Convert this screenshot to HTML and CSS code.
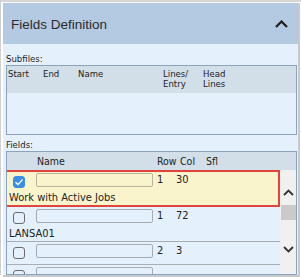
FILE: index.html
```html
<!DOCTYPE html>
<html>
<head>
<meta charset="utf-8">
<link rel="stylesheet" href="styles.css">
</head>
<body>
<div class="frame">
  <div class="panel">
    <div class="hdr">
      <span class="title">Fields Definition</span>
      <svg class="hchev" width="13" height="8" viewBox="0 0 13 8"><polyline points="1,7 6.5,1.5 12,7" fill="none" stroke="#1e1e1e" stroke-width="2.2"/></svg>
    </div>
    <div class="body">
      <div class="label">Subfiles:</div>
      <div class="box sub">
        <div class="shead">
          <div class="sc c-start">Start</div>
          <div class="sc c-end">End</div>
          <div class="sc c-name">Name</div>
          <div class="sc c-lines">Lines/<br>Entry</div>
          <div class="sc c-head">Head<br>Lines</div>
        </div>
      </div>
      <div class="label lf">Fields:</div>
      <div class="box fields">
        <div class="fhead">
          <div class="fh-name">Name</div>
          <div class="fh-row">Row</div>
          <div class="fh-col">Col</div>
          <div class="fh-sfl">Sfl</div>
        </div>
        <div class="fwrap">
          <div class="rows">
            <div class="row sel">
              <div class="line1">
                <span class="cb on"><svg width="12" height="12" viewBox="0 0 12 12"><polyline points="2.5,6.2 5,8.6 9.6,3.4" fill="none" stroke="#fff" stroke-width="1.4"/></svg></span>
                <span class="inp"></span>
                <span class="v-row">1</span>
                <span class="v-col">30</span>
              </div>
              <div class="desc">Work with Active Jobs</div>
            </div>
            <div class="row">
              <div class="line1">
                <span class="cb"></span>
                <span class="inp"></span>
                <span class="v-row">1</span>
                <span class="v-col">72</span>
              </div>
              <div class="desc">LANSA01</div>
            </div>
            <div class="row nodesc">
              <div class="line1">
                <span class="cb"></span>
                <span class="inp"></span>
                <span class="v-row">2</span>
                <span class="v-col">3</span>
              </div>
            </div>
            <div class="row nodesc">
              <div class="line1">
                <span class="cb"></span>
                <span class="inp"></span>
                <span class="v-row"></span>
                <span class="v-col"></span>
              </div>
            </div>
          </div>
          <div class="scroll">
            <svg class="sup" width="11" height="7" viewBox="0 0 11 7"><polyline points="1,6 5.5,1.5 10,6" fill="none" stroke="#333" stroke-width="1.8"/></svg>
            <div class="thumb"></div>
            <svg class="sdown" width="11" height="7" viewBox="0 0 11 7"><polyline points="1,1 5.5,5.5 10,1" fill="none" stroke="#333" stroke-width="1.8"/></svg>
          </div>
        </div>
      </div>
    </div>
  </div>
</div>
</body>
</html>
```
FILE: styles.css
```css
html, body {
  margin: 0;
  padding: 0;
  background: #ffffff;
}
body {
  width: 301px;
  height: 277px;
  overflow: hidden;
  font-family: "DejaVu Sans Condensed", "DejaVu Sans", "Liberation Sans", sans-serif;
  font-stretch: condensed;
  color: #222;
}
.frame {
  border-left: 1px solid #cfcfcf;
  border-top: 2px solid #d6d6d6;
  height: 275px;
  padding: 1px 0 0 2px;
  box-sizing: border-box;
}
.panel {
  width: 297px;
  height: 274px;
  box-sizing: border-box;
  border-right: 2px solid #c9c9c9;
  border-bottom: 2px solid #c9c9c9;
  background: #e4f0fc;
  display: flex;
  flex-direction: column;
}
.hdr {
  height: 41px;
  background: #b4cae3;
  display: flex;
  align-items: center;
  justify-content: space-between;
  padding: 0 10px 0 8px;
  flex: none;
}
.title {
  font-family: "Liberation Sans", Arial, sans-serif;
  font-stretch: normal;
  font-size: 13.5px;
  color: #2a2a2a;
  margin-top: 1px;
}
.hchev {
  display: block;
  margin-top: 1px;
}
.body {
  padding: 9px 1px 0 3px;
  display: flex;
  flex-direction: column;
}
.label {
  font-size: 9.5px;
  line-height: 12px;
  height: 12px;
  color: #1e1e1e;
}
.lf {
  margin-top: 4px;
}
.box {
  border: 1px solid #8ba3bc;
}
.sub {
  height: 68px;
}
.shead {
  height: 27px;
  background: #d3dfe8;
  display: flex;
  padding: 3px 0 0 1px;
  box-sizing: border-box;
  font-size: 9.5px;
  line-height: 10px;
  color: #222;
}
.c-start { width: 35px; }
.c-end { width: 35px; }
.c-name { width: 85px; }
.c-lines { width: 40px; }
.c-head { width: 40px; }

.fields {
  height: 122px;
  overflow: hidden;
  display: flex;
  flex-direction: column;
}
.fhead {
  height: 18px;
  flex: none;
  background: #d3dfe8;
  display: flex;
  align-items: center;
  font-size: 10.5px;
  color: #222;
}
.fh-name { padding-left: 30px; width: 120px; }
.fh-row { width: 23px; }
.fh-col { width: 26px; }
.fwrap {
  display: flex;
  flex: 1;
  min-height: 0;
}
.rows {
  width: 273px;
  flex: none;
}
.row {
  position: relative;
  padding: 2px 0 0 0;
  border-bottom: 1px solid #a9aeb3;
}
.row.nodesc {
  padding-bottom: 3px;
}
.row.sel {
  background: #faf4cc;
  padding-top: 3px;
  padding-bottom: 1px;
}
.row.sel::after {
  content: "";
  position: absolute;
  left: -3px;
  right: 0;
  top: 0;
  bottom: -1px;
  border: 2px solid #e0443c;
}
.line1 {
  height: 17px;
  display: flex;
  align-items: flex-start;
  font-size: 11px;
  line-height: 14px;
}
.cb {
  width: 12px;
  height: 12px;
  box-sizing: border-box;
  border: 1px solid #6a6a6a;
  border-radius: 3px;
  margin: 3px 0 0 6px;
  flex: none;
  display: block;
}
.cb.on {
  background: #3a8ee6;
  border-color: #3a8ee6;
}
.cb svg {
  display: block;
  margin: -1px;
}
.inp {
  width: 117px;
  height: 14px;
  box-sizing: border-box;
  border: 1px solid #a7acb2;
  border-radius: 2px;
  margin-left: 11px;
  flex: none;
}
.sel .inp {
  border-color: #b9b49e;
}
.v-row {
  padding-left: 4px;
  width: 19px;
}
.v-col {
  width: 26px;
}
.desc {
  height: 15px;
  font-size: 11px;
  line-height: 15px;
  padding-left: 2px;
}
.scroll {
  width: 16px;
  flex: none;
  background: #f0f0f0;
  display: flex;
  flex-direction: column;
  align-items: center;
}
.sup {
  display: block;
  margin-top: 19px;
}
.thumb {
  width: 15px;
  height: 15px;
  background: #cacaca;
  margin-top: 9px;
}
.sdown {
  display: block;
  margin-top: 26px;
}
```
